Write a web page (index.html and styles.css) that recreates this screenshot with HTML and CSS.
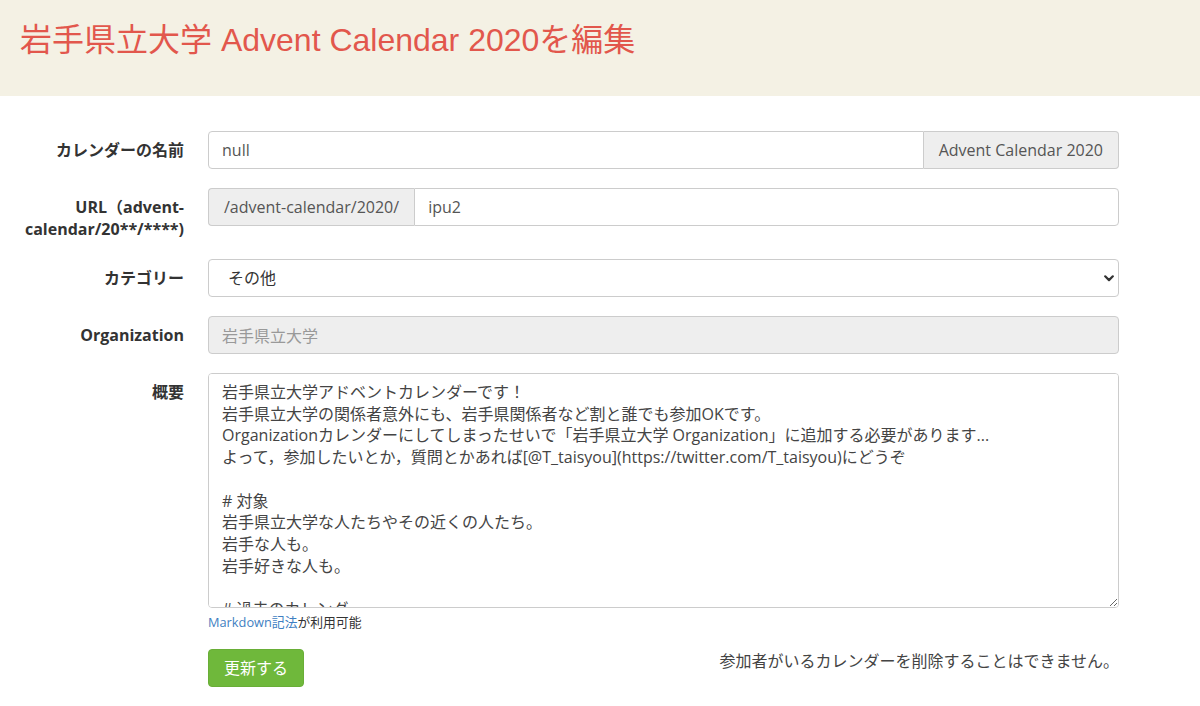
FILE: index.html
```html
<!DOCTYPE html>
<html lang="ja">
<head>
<meta charset="utf-8">
<title>岩手県立大学 Advent Calendar 2020を編集</title>
<link rel="stylesheet" href="styles.css">
</head>
<body>
<header class="page-header">
  <h1 class="page-title">岩手県立大学 Advent Calendar 2020を編集</h1>
</header>
<main class="edit-form">
  <div class="form-row">
    <label class="form-label">カレンダーの名前</label>
    <div class="input-group">
      <input class="control grouped-left" type="text" value="null">
      <span class="addon addon-right">Advent Calendar 2020</span>
    </div>
  </div>
  <div class="form-row">
    <label class="form-label">URL（advent-calendar/20**/****)</label>
    <div class="input-group">
      <span class="addon addon-left">/advent-calendar/2020/</span>
      <input class="control grouped-right" type="text" value="ipu2">
    </div>
  </div>
  <div class="form-row">
    <label class="form-label">カテゴリー</label>
    <div class="select-wrap">
      <select class="control select-control">
        <option>その他</option>
      </select>
      <svg class="select-arrow" width="10" height="7" viewBox="0 0 10 7"><path d="M1.2 1.3 L5 5.1 L8.8 1.3" fill="none" stroke="#333" stroke-width="2.2" stroke-linecap="round" stroke-linejoin="round"/></svg>
    </div>
  </div>
  <div class="form-row">
    <label class="form-label">Organization</label>
    <input class="control control-disabled" type="text" value="岩手県立大学" disabled>
  </div>
  <div class="form-row form-row-text">
    <label class="form-label">概要</label>
    <div class="text-field">
      <textarea class="control text-control">岩手県立大学アドベントカレンダーです！
岩手県立大学の関係者意外にも、岩手県関係者など割と誰でも参加OKです。
Organizationカレンダーにしてしまったせいで「岩手県立大学 Organization」に追加する必要があります...
よって，参加したいとか，質問とかあれば[@T_taisyou](https://twitter.com/T_taisyou)にどうぞ

# 対象
岩手県立大学な人たちやその近くの人たち。
岩手な人も。
岩手好きな人も。

# 過去のカレンダー
- 2019
- 2018</textarea>
      <p class="help-text"><a class="help-link" href="#">Markdown記法</a>が利用可能</p>
    </div>
  </div>
  <div class="form-row">
    <div class="form-spacer"></div>
    <div class="actions">
      <button class="btn-update" type="button">更新する</button>
      <p class="delete-note">参加者がいるカレンダーを削除することはできません。</p>
    </div>
  </div>
</main>
</body>
</html>
```
FILE: styles.css
```css
* {
  box-sizing: border-box;
}

html, body {
  margin: 0;
  background: #fff;
}

body {
  font-family: "Open Sans", "Noto Sans CJK JP", sans-serif;
  font-size: 16px;
  line-height: 22px;
  color: #333;
  text-spacing-trim: space-all;
}

.page-header {
  background: #f4f1e4;
  height: 96px;
  padding: 21px 0 0 20px;
}

.page-title {
  margin: 0;
  font-family: "Liberation Sans", "Noto Sans CJK JP", sans-serif;
  font-size: 32px;
  line-height: 38px;
  font-weight: normal;
  color: #e2574c;
}

.edit-form {
  padding: 35px 0 0 24px;
}

.form-row {
  display: grid;
  grid-template-columns: 160px 911px;
  column-gap: 24px;
  align-items: start;
  margin-bottom: 19px;
}

.form-row-text {
  margin-bottom: 18px;
}

.form-label {
  text-align: right;
  font-weight: bold;
  font-size: 16px;
  line-height: 22px;
  padding-top: 8px;
  color: #333;
}

.control {
  display: block;
  width: 100%;
  height: 38px;
  margin: 0;
  padding: 0 13px;
  border: 1px solid #ccc;
  border-radius: 4px;
  background: #fff;
  font-family: inherit;
  font-size: 16px;
  color: #555;
  outline: none;
  text-spacing-trim: space-all;
}

.input-group {
  display: flex;
  height: 38px;
}

.input-group .control {
  flex: 1;
  min-width: 0;
}

.grouped-left {
  border-radius: 4px 0 0 4px;
}

.grouped-right {
  border-radius: 0 4px 4px 0;
}

.addon {
  display: flex;
  align-items: center;
  padding: 0 15px;
  background: #eee;
  border: 1px solid #ccc;
  color: #555;
  white-space: nowrap;
  font-size: 16px;
}

.addon-right {
  border-left: 0;
  border-radius: 0 4px 4px 0;
}

.addon-left {
  border-right: 0;
  border-radius: 4px 0 0 4px;
}

.select-wrap {
  position: relative;
}

.select-control {
  -webkit-appearance: none;
  appearance: none;
  padding-left: 19px;
  color: #333;
}

.select-arrow {
  position: absolute;
  right: 5px;
  top: 16px;
  pointer-events: none;
}

.control-disabled {
  background: #eee;
  color: #999;
  -webkit-text-fill-color: #999;
  opacity: 1;
}

.text-field {
  display: flex;
  flex-direction: column;
}

.text-control {
  height: 235px;
  padding: 8px 13px;
  line-height: 21.7px;
  resize: vertical;
  overflow-y: auto;
  color: #444;
  scrollbar-width: none;
  font-feature-settings: "fwid" 1;
}

.text-control::-webkit-scrollbar {
  display: none;
}

.help-text {
  margin: 5px 0 0;
  font-size: 12.8px;
  line-height: 18px;
  color: #333;
}

.help-link {
  color: #3f7fc2;
  text-decoration: none;
}

.actions {
  display: flex;
  justify-content: space-between;
  align-items: flex-start;
}

.btn-update {
  height: 38px;
  padding: 0 15px;
  border: 1px solid #69ae37;
  border-radius: 4px;
  background: #6fb83b;
  color: #fff;
  font-family: inherit;
  font-size: 16px;
  line-height: 22px;
  cursor: pointer;
}

.delete-note {
  margin: 1px 0 0;
  font-size: 16px;
  line-height: 22px;
  color: #444;
}
```
